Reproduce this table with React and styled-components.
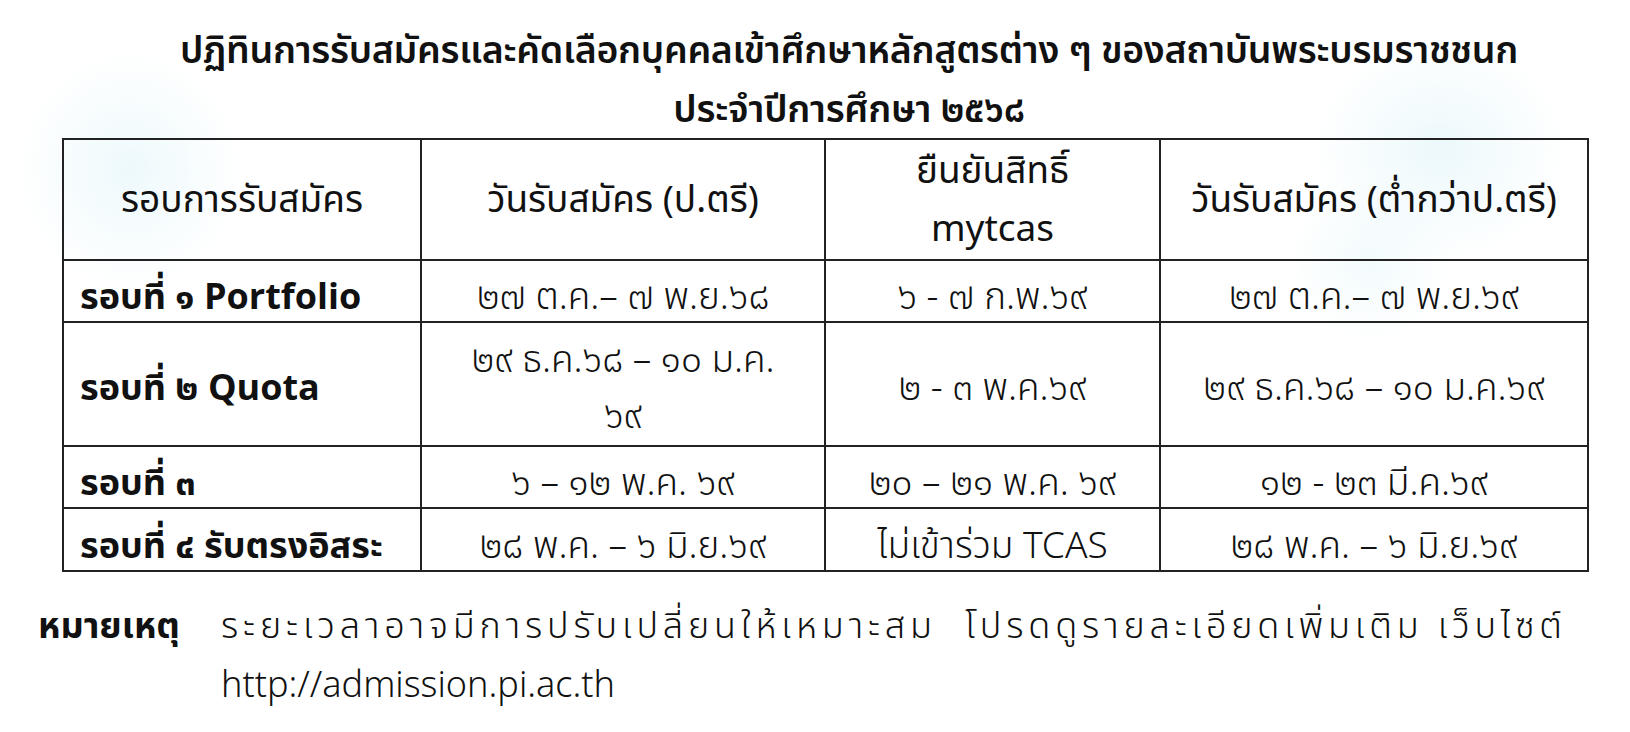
import React from "react";
import styled, { createGlobalStyle } from "styled-components";

const Global = createGlobalStyle`
  html, body { margin: 0; padding: 0; background: #ffffff; }
  body { font-family: "Noto Sans Thai", "Noto Sans", "DejaVu Sans", sans-serif; color: #111; }
`;

const Page = styled.div`
  width: 1630px;
  height: 732px;
  box-sizing: border-box;
  padding-top: 22px;
  background:
    radial-gradient(ellipse 150px 160px at 130px 170px, rgba(228, 246, 250, 0.65), rgba(228, 246, 250, 0) 75%),
    radial-gradient(ellipse 170px 150px at 1440px 150px, rgba(228, 246, 250, 0.7), rgba(228, 246, 250, 0) 75%),
    radial-gradient(ellipse 110px 110px at 1370px 260px, rgba(230, 247, 250, 0.5), rgba(230, 247, 250, 0) 75%),
    #ffffff;
  overflow: hidden;
`;

const Title = styled.h1`
  margin: 0;
  padding-left: 68px;
  text-align: center;
  font-family: "Noto Sans Thai", "Noto Sans", sans-serif;
  font-weight: 600;
  font-size: 37.5px;
  line-height: 59px;
  letter-spacing: -0.3px;
  color: #111;
`;

const Table = styled.table`
  margin: -2px 0 0 62px;
  border-collapse: collapse;
  table-layout: fixed;
  width: 1525px;
  font-family: "Noto Sans Thai", "Noto Sans", sans-serif;
  font-size: 37px;
  color: #111;
`;

const Row = styled.tr`
  height: ${(p) => p.$h}px;
`;

const Head = styled.th`
  border: 2px solid #222;
  font-weight: 400;
  text-align: center;
  vertical-align: middle;
  line-height: 58px;
  padding: 3px 0 0;
  white-space: nowrap;
`;

const Cell = styled.td`
  border: 2px solid #222;
  text-align: ${(p) => (p.$label ? "left" : "center")};
  font-weight: ${(p) => (p.$label ? 700 : 300)};
  font-size: ${(p) => (p.$label ? 36 : 37)}px;
  padding: ${(p) => (p.$multi ? 10 : 14)}px 0 0 ${(p) => (p.$label ? 16 : 0)}px;
  vertical-align: middle;
  line-height: ${(p) => (p.$multi ? 56 : 46)}px;
  white-space: nowrap;
`;

const Note = styled.div`
  display: flex;
  margin-top: 26px;
  padding-left: 38px;
  font-family: "Noto Sans Thai", "Noto Sans", sans-serif;
  font-size: 36px;
  line-height: 59px;
  color: #111;
`;

const NoteLabel = styled.div`
  width: 183px;
  flex: none;
  font-weight: 700;
`;

const NoteText = styled.div`
  font-weight: 300;
  white-space: nowrap;
`;

const NoteLine = styled.div`
  letter-spacing: ${(p) => p.$ls || 0}px;
`;

const rows = [
  { h: 62, label: "รอบที่ ๑ Portfolio", a: "๒๗ ต.ค.– ๗ พ.ย.๖๘", b: "๖ - ๗ ก.พ.๖๙", c: "๒๗ ต.ค.– ๗ พ.ย.๖๙" },
  { h: 124, label: "รอบที่ ๒ Quota", a: ["๒๙ ธ.ค.๖๘ – ๑๐ ม.ค.", "๖๙"], b: "๒ - ๓ พ.ค.๖๙", c: "๒๙ ธ.ค.๖๘ – ๑๐ ม.ค.๖๙" },
  { h: 62, label: "รอบที่ ๓", a: "๖ – ๑๒ พ.ค. ๖๙", b: "๒๐ – ๒๑ พ.ค. ๖๙", c: "๑๒ - ๒๓ มี.ค.๖๙" },
  { h: 63, label: "รอบที่ ๔ รับตรงอิสระ", a: "๒๘ พ.ค. – ๖ มิ.ย.๖๙", b: "ไม่เข้าร่วม TCAS", c: "๒๘ พ.ค. – ๖ มิ.ย.๖๙" },
];

export default function App() {
  return (
    <Page>
      <Global />
      <Title>
        ปฏิทินการรับสมัครและคัดเลือกบุคคลเข้าศึกษาหลักสูตรต่าง ๆ ของสถาบันพระบรมราชชนก
        <br />
        ประจำปีการศึกษา ๒๕๖๘
      </Title>
      <Table>
        <colgroup>
          <col style={{ width: 358 }} />
          <col style={{ width: 404 }} />
          <col style={{ width: 335 }} />
          <col style={{ width: 428 }} />
        </colgroup>
        <thead>
          <Row $h={120}>
            <Head>รอบการรับสมัคร</Head>
            <Head>วันรับสมัคร (ป.ตรี)</Head>
            <Head>
              ยืนยันสิทธิ์
              <br />
              mytcas
            </Head>
            <Head>วันรับสมัคร (ต่ำกว่าป.ตรี)</Head>
          </Row>
        </thead>
        <tbody>
          {rows.map((r) => {
            const multi = Array.isArray(r.a);
            return (
              <Row key={r.label} $h={r.h}>
                <Cell $label $multi={multi}>{r.label}</Cell>
                <Cell $multi={multi}>
                  {multi ? (
                    <>
                      {r.a[0]}
                      <br />
                      {r.a[1]}
                    </>
                  ) : (
                    r.a
                  )}
                </Cell>
                <Cell $multi={multi}>{r.b}</Cell>
                <Cell $multi={multi}>{r.c}</Cell>
              </Row>
            );
          })}
        </tbody>
      </Table>
      <Note>
        <NoteLabel>หมายเหตุ</NoteLabel>
        <NoteText>
          <NoteLine $ls={4.8}>
            ระยะเวลาอาจมีการปรับเปลี่ยนให้เหมาะสม&nbsp; โปรดดูรายละเอียดเพิ่มเติม เว็บไซต์
          </NoteLine>
          <NoteLine>http://admission.pi.ac.th</NoteLine>
        </NoteText>
      </Note>
    </Page>
  );
}
